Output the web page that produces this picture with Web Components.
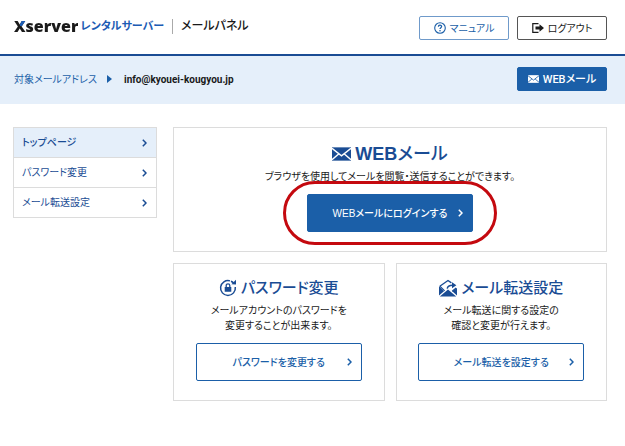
<!DOCTYPE html>
<html lang="ja">
<head>
<meta charset="utf-8">
<meta name="viewport" content="width=device-width, initial-scale=1">
<title>Xserver レンタルサーバー | メールパネル</title>
<style>
  :root {
    --blue: #1b5fa8;
    --navy: #1a4c94;
    --pale: #e5effa;
    --line: #dcdcdc;
    --ink: #1a1a1a;
  }
  body {
    margin: 0;
    background: #fff;
    color: var(--ink);
    font-family: Roboto, "Noto Sans CJK JP", sans-serif;
    font-size: 10px;
    line-height: 15px;
    font-feature-settings: "palt", "kern";
  }
</style>
</head>
<body>
<mail-panel></mail-panel>

<script>
const ICONS = {
  mail: ['0 0 20 14', `
    <path fill="currentColor" d="M0 0h20v14H0z"/>
    <path fill="none" stroke="var(--icon-bg, #fff)" stroke-width="1.5" d="M0 1l10 8 10-8M0 13l7-6M20 13l-7-6"/>`],
  help: ['0 0 12 12', `
    <circle cx="6" cy="6" r="5.3" fill="none" stroke="currentColor" stroke-width="1.1"/>
    <path fill="none" stroke="currentColor" stroke-width="1.3" d="M4.4 4.7C4.4 2.7 7.6 2.7 7.6 4.6 7.6 5.8 6 5.7 6 7.1"/>
    <circle cx="6" cy="8.7" r=".8" fill="currentColor"/>`],
  logout: ['0 0 12 10', `
    <path fill="none" stroke="currentColor" stroke-width="1.2" d="M6.5 .7H.8v8.6h5.7"/>
    <path fill="currentColor" d="M3.5 3.4h4V1.2L12 5 7.5 8.8V6.6h-4z"/>`],
  lock: ['0 0 18 18', `
    <path fill="none" stroke="currentColor" stroke-width="1.5" d="M11 1.9A7.4 7.4 0 1 0 16.3 8M12 2.2A7.4 7.4 0 0 1 14.6 4"/>
    <path fill="currentColor" d="M12.4 5.2L17 5.6V.8zM5.7 8h6.6v4.8H5.7z"/>
    <path fill="none" stroke="currentColor" stroke-width="1.3" d="M7.2 8.2V6.6a1.8 1.8 0 0 1 3.6 0v1.6"/>`],
  forward: ['0 0 18 17', `
    <path fill="none" stroke="currentColor" stroke-width="1.3" d="M.8 6.8L9 1l3.4 2.4M.8 6.6l4.8 4.8M17.2 8.4l-4 3.4"/>
    <path fill="currentColor" d="M0 6.8L5 11.8 0 16zM18 8.4V16l-4.8-4.2zM.8 17L9 10l8.2 7z"/>
    <path fill="none" stroke="currentColor" stroke-width="1.5" d="M8.2 9.2C8.6 6.8 10.4 5.8 13.6 5.8"/>
    <path fill="currentColor" d="M13 2.8L17.4 5.8 13 8.8z"/>`],
  chevron: ['0 0 5 8', `
    <path fill="none" stroke="currentColor" stroke-width="1.5" d="M.8 .8L4 4 .8 7.2"/>`]
};

class PanelIcon extends HTMLElement {
  connectedCallback() {
    const [box, shapes] = ICONS[this.getAttribute('name')];
    this.attachShadow({ mode: 'open' }).innerHTML = `
      <style>
        :host { display: block; flex: none; }
        svg { display: block; width: 100%; height: 100%; }
      </style>
      <svg viewBox="${box}" aria-hidden="true">${shapes}</svg>
    `;
  }
}

class PanelButton extends HTMLElement {
  connectedCallback() {
    this.attachShadow({ mode: 'open' }).innerHTML = `
      <style>
        :host { display: block; }
        button {
          display: flex;
          align-items: center;
          justify-content: center;
          gap: 4px;
          box-sizing: border-box;
          width: 100%;
          height: 24px;
          padding: 0;
          border: 1px solid var(--edge, currentColor);
          border-radius: 2px;
          background: #fff;
          color: inherit;
          font: inherit;
          font-feature-settings: inherit;
          cursor: pointer;
        }
        :host([solid]) button {
          background: var(--blue);
          border-color: var(--blue);
          color: #fff;
        }
        :host([large]) button {
          display: grid;
          grid-template-columns: 1fr auto 1fr;
          height: 38px;
          padding: 0 9px;
          font-family: "Liberation Sans", "Noto Sans CJK JP", sans-serif;
          font-weight: 500;
        }
        .label { grid-column: 2; white-space: nowrap; }
        .chevron { display: none; width: 5px; height: 8px; justify-self: end; }
        :host([large]) .chevron { display: block; }
      </style>
      <button type="button">
        <slot name="icon"></slot>
        <span class="label"><slot></slot></span>
        <panel-icon class="chevron" name="chevron"></panel-icon>
      </button>
    `;
  }
}

class PanelHeader extends HTMLElement {
  connectedCallback() {
    this.attachShadow({ mode: 'open' }).innerHTML = `
      <style>
        :host { display: block; }
        header {
          display: flex;
          align-items: flex-start;
          gap: 8px;
          padding: 16px 18px 14px 14px;
          border-bottom: 2px solid var(--navy);
        }
        .brand {
          display: flex;
          flex: 1;
          align-items: center;
          white-space: nowrap;
          font-size: 11px;
          font-weight: 700;
        }
        .logo {
          /* blue tip on the upper right arm of the X */
          background:
            linear-gradient(#1c5cb4, #1c5cb4) 6px 0 / 6px 10px no-repeat,
            var(--ink);
          background-clip: text;
          -webkit-background-clip: text;
          color: transparent;
          font: 800 16px/20px "Open Sans", sans-serif;
        }
        .service { margin: 0 8px 0 2px; color: #1c5cb4; }
        .product { padding-left: 8px; border-left: 1px solid #aaa; font-size: 12px; font-weight: 500; }
        panel-button { width: 90px; --edge: #555; }
        .manual { color: var(--blue); --edge: #6f9aca; }
        panel-icon { width: 12px; height: 12px; }
      </style>
      <header>
        <div class="brand">
          <span class="logo">Xserver</span>
          <span class="service">レンタルサーバー</span>
          <span class="product">メールパネル</span>
        </div>
        <panel-button class="manual"><panel-icon slot="icon" name="help"></panel-icon>マニュアル</panel-button>
        <panel-button><panel-icon slot="icon" name="logout"></panel-icon>ログアウト</panel-button>
      </header>
    `;
  }
}

class AccountBar extends HTMLElement {
  connectedCallback() {
    this.attachShadow({ mode: 'open' }).innerHTML = `
      <style>
        :host {
          display: flex;
          align-items: center;
          padding: 11px 18px 13px 14px;
          background: var(--pale);
        }
        .label { color: var(--blue); }
        .arrow {
          margin: 0 12px 0 10px;
          border: solid transparent;
          border-width: 4px 0 4px 5px;
          border-left-color: var(--blue);
        }
        .address { flex: 1; font-weight: 700; }
        panel-button { width: 90px; font-size: 11px; font-weight: 500; }
        panel-icon { --icon-bg: var(--blue); width: 11px; height: 8px; }
      </style>
      <span class="label">対象メールアドレス</span>
      <span class="arrow"></span>
      <span class="address"><slot></slot></span>
      <panel-button solid><panel-icon slot="icon" name="mail"></panel-icon>WEBメール</panel-button>
    `;
  }
}

class SideMenu extends HTMLElement {
  connectedCallback() {
    this.attachShadow({ mode: 'open' }).innerHTML = `
      <style>
        :host { display: block; }
        nav { border: 1px solid var(--line); }
        a {
          display: flex;
          align-items: center;
          justify-content: space-between;
          height: 29px;
          padding: 0 9px 0 8px;
          color: var(--navy);
          text-decoration: none;
        }
        a + a { border-top: 1px solid var(--line); }
        a[aria-current] { background: var(--pale); font-weight: 500; }
        panel-icon { width: 5px; height: 8px; }
      </style>
      <nav>
        <a href="#top" aria-current="page">トップページ<panel-icon name="chevron"></panel-icon></a>
        <a href="#password">パスワード変更<panel-icon name="chevron"></panel-icon></a>
        <a href="#forward">メール転送設定<panel-icon name="chevron"></panel-icon></a>
      </nav>
    `;
  }
}

class MenuCard extends HTMLElement {
  connectedCallback() {
    this.attachShadow({ mode: 'open' }).innerHTML = `
      <style>
        :host {
          display: flex;
          flex-direction: column;
          align-items: center;
          box-sizing: border-box;
          padding: 12px 8px 19px;
          border: 1px solid var(--line);
          text-align: center;
        }
        :host([marked]) { padding-top: 14px; }
        h2 {
          display: flex;
          align-items: center;
          gap: 4px;
          margin: 0;
          color: var(--navy);
          font-size: 15px;
          font-weight: 500;
          line-height: 24px;
          white-space: nowrap;
        }
        :host([marked]) h2 { font-size: 18px; }
        p { margin: 3px 0 10px; }
        .action { position: relative; width: 166px; color: var(--blue); }
        .ring {
          position: absolute;
          inset: -13px -24px;
          border: 3px solid #c4090f;
          border-radius: 32px;
          pointer-events: none;
        }
        :host(:not([marked])) .ring { display: none; }
      </style>
      <h2><slot name="icon"></slot><span><slot name="title"></slot></span></h2>
      <p><slot></slot></p>
      <div class="action">
        <slot name="action"></slot>
        <div class="ring"></div>
      </div>
    `;
  }
}

class MailPanel extends HTMLElement {
  connectedCallback() {
    this.attachShadow({ mode: 'open' }).innerHTML = `
      <style>
        :host { display: block; }
        .body {
          display: grid;
          grid-template-columns: 144px 1fr;
          align-items: start;
          gap: 16px;
          padding: 23px 18px 44px 13px;
        }
        main {
          display: grid;
          grid-template-columns: 1fr 1fr;
          gap: 11px;
        }
        .wide { grid-column: 1 / -1; }
        .wide b { font-family: "Liberation Sans", sans-serif; }
        .mail { width: 19px; height: 14px; }
        .lock, .forward { width: 18px; height: 18px; }
      </style>
      <panel-header></panel-header>
      <account-bar>info@kyouei-kougyou.jp</account-bar>
      <div class="body">
        <side-menu></side-menu>
        <main>
          <menu-card class="wide" marked>
            <panel-icon class="mail" slot="icon" name="mail"></panel-icon>
            <span slot="title"><b>WEB</b>メール</span>
            ブラウザを使用してメールを閲覧・送信することができます。
            <panel-button slot="action" solid large>WEBメールにログインする</panel-button>
          </menu-card>
          <menu-card>
            <panel-icon class="lock" slot="icon" name="lock"></panel-icon>
            <span slot="title">パスワード変更</span>
            メールアカウントのパスワードを<br>変更することが出来ます。
            <panel-button slot="action" large>パスワードを変更する</panel-button>
          </menu-card>
          <menu-card>
            <panel-icon class="forward" slot="icon" name="forward"></panel-icon>
            <span slot="title">メール転送設定</span>
            メール転送に関する設定の<br>確認と変更が行えます。
            <panel-button slot="action" large>メール転送を設定する</panel-button>
          </menu-card>
        </main>
      </div>
    `;
  }
}

customElements.define('panel-icon', PanelIcon);
customElements.define('panel-button', PanelButton);
customElements.define('panel-header', PanelHeader);
customElements.define('account-bar', AccountBar);
customElements.define('side-menu', SideMenu);
customElements.define('menu-card', MenuCard);
customElements.define('mail-panel', MailPanel);
</script>
</body>
</html>
